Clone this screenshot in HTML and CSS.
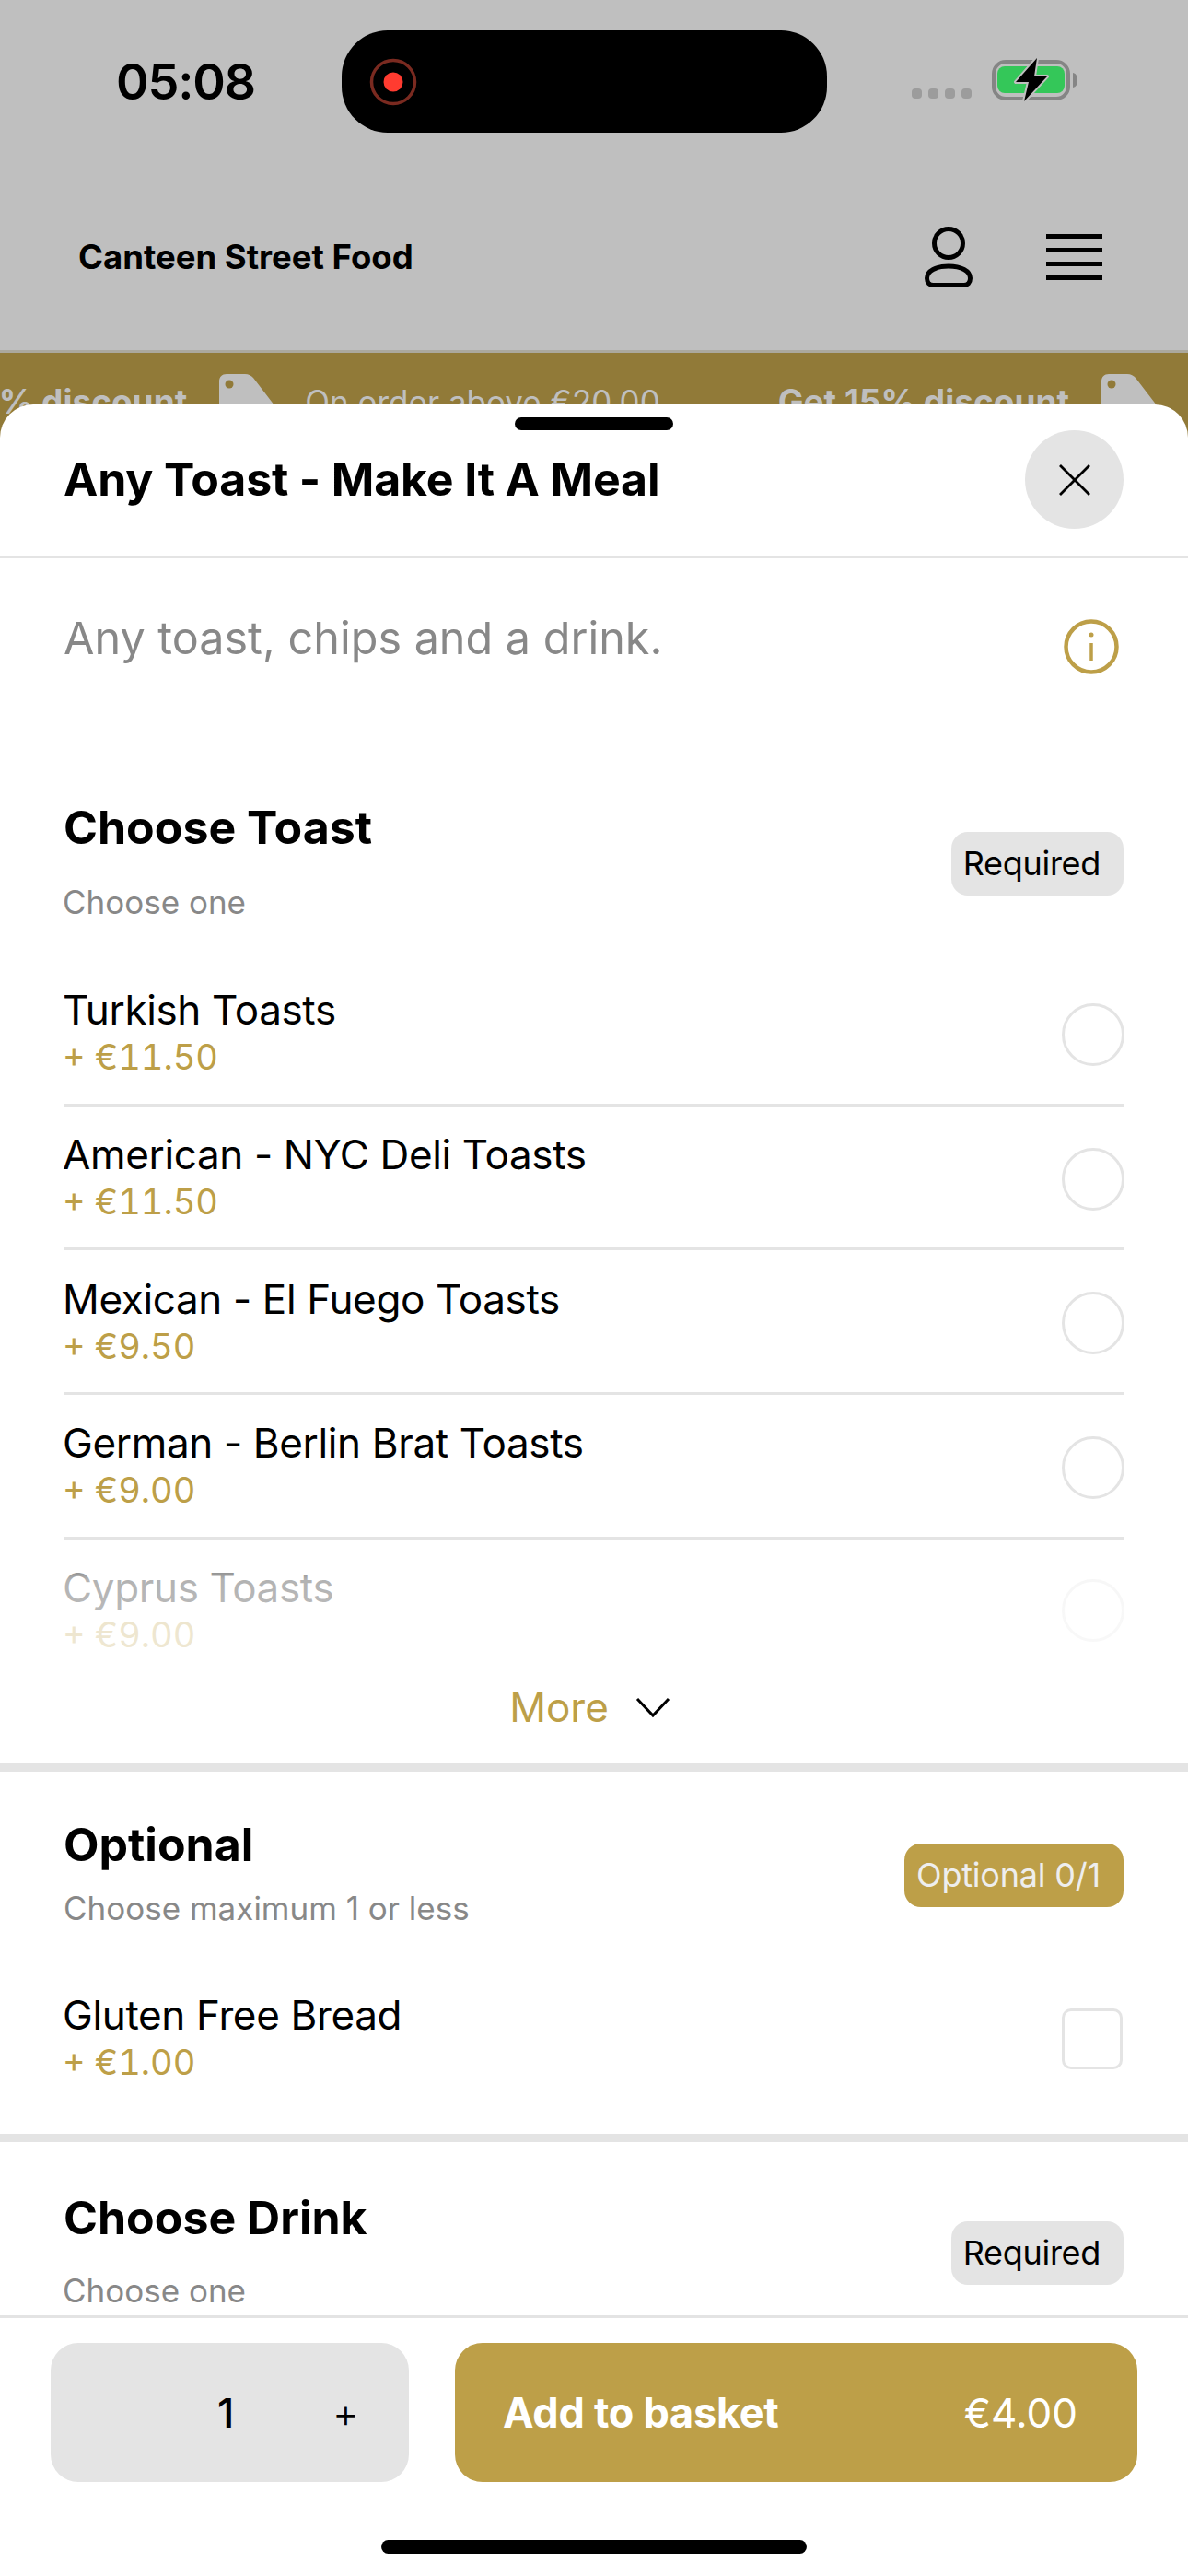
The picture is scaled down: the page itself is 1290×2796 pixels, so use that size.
FILE: index.html
```html
<!DOCTYPE html>
<html lang="en">
<head>
<meta charset="utf-8">
<title>Any Toast - Make It A Meal</title>
<link rel="stylesheet" href="styles.css">
</head>
<body>
<div class="phone">
  <div class="backdrop">
    <div class="status">
      <span class="time">05:08</span>
      <div class="island">
        <svg class="rec" width="56" height="56" viewBox="0 0 56 56"><circle cx="28" cy="28" r="23.5" fill="none" stroke="#7a2a20" stroke-width="3.5"/><circle cx="28" cy="28" r="10.5" fill="#ff3b30"/></svg>
      </div>
      <div class="status-right">
        <div class="dots"><i></i><i></i><i></i><i></i></div>
        <svg class="battery" width="96" height="50" viewBox="0 0 96 50">
          <rect x="2" y="5" width="81" height="40" rx="13" fill="none" stroke="#858585" stroke-width="4"/>
          <rect x="6" y="10" width="73" height="29" rx="8" fill="#34c759"/>
          <path d="M88 17c4 1 5 4 5 8s-1 7-5 8z" fill="#858585"/>
          <path d="M49 1 L26 27 H40 L35 48 L60 21 H46 Z" fill="#000" stroke="#bfbfbf" stroke-width="4" stroke-linejoin="round" paint-order="stroke"/>
        </svg>
      </div>
    </div>
    <header class="topbar">
      <span class="brand">Canteen Street Food</span>
      <div class="top-icons">
        <svg width="52" height="66" viewBox="0 0 52 66" fill="none" stroke="#000" stroke-width="5"><circle cx="26" cy="18" r="15.500"/><path d="M2.500 56c0-8 10-13 23.500-13s23.500 5 23.500 13c0 5-3 7.500-7 7.500H9.500c-4 0-7-2.500-7-7.500z" stroke-linejoin="round"/></svg>
        <div class="burger"><i></i><i></i><i></i><i></i></div>
      </div>
    </header>
    <div class="banner">
      <div class="track">
        <span class="promo-bold">Get 15% discount</span>
        <svg class="tag" width="62" height="64" viewBox="0 0 62 64"><path d="M8 0H28c4 0 7 2 9 4L60 34c3 4 2 8-1 11L42 60c-4 4-9 4-13 0L4 44c-3-3-4-5-4-9V8C0 3 3 0 8 0z" fill="#bfbfbf"/><circle cx="11" cy="11" r="4.500" fill="#917a38"/></svg>
        <span class="promo">On order above €20.00</span>
        <span class="promo-bold">Get 15% discount</span>
        <svg class="tag" width="62" height="64" viewBox="0 0 62 64"><path d="M8 0H28c4 0 7 2 9 4L60 34c3 4 2 8-1 11L42 60c-4 4-9 4-13 0L4 44c-3-3-4-5-4-9V8C0 3 3 0 8 0z" fill="#bfbfbf"/><circle cx="11" cy="11" r="4.500" fill="#917a38"/></svg>
      </div>
    </div>
  </div>

  <section class="sheet">
    <div class="handle"></div>
    <div class="sheet-head">
      <h1 class="sheet-title">Any Toast - Make It A Meal</h1>
      <button class="close" aria-label="Close">
        <svg width="36" height="36" viewBox="0 0 36 36" fill="none" stroke="#000" stroke-width="2.800"><path d="M2 2 34 34M34 2 2 34"/></svg>
      </button>
    </div>
    <div class="scroll">
      <div class="desc">
        <p class="desc-text">Any toast, chips and a drink.</p>
        <svg class="info" width="60" height="60" viewBox="0 0 60 60" fill="none" stroke="#bd9f48"><circle cx="30" cy="30" r="27.500" stroke-width="4.500"/><path d="M30 26V45" stroke-width="3.500"/><circle cx="30" cy="17" r="2.500" fill="#bd9f48" stroke="none"/></svg>
      </div>

      <div class="group group-first">
        <div class="group-head">
          <div class="group-text">
            <h2 class="group-title">Choose Toast</h2>
            <p class="group-sub group-sub-short">Choose one</p>
          </div>
          <span class="badge">Required</span>
        </div>
        <div class="list">
          <div class="item"><div class="item-text"><div class="name">Turkish Toasts</div><div class="price">+ €11.50</div></div><span class="radio"></span></div>
          <div class="item"><div class="item-text"><div class="name">American - NYC Deli Toasts</div><div class="price">+ €11.50</div></div><span class="radio"></span></div>
          <div class="item"><div class="item-text"><div class="name">Mexican - El Fuego Toasts</div><div class="price">+ €9.50</div></div><span class="radio"></span></div>
          <div class="item"><div class="item-text"><div class="name">German - Berlin Brat Toasts</div><div class="price">+ €9.00</div></div><span class="radio"></span></div>
          <div class="item"><div class="item-text"><div class="name">Cyprus Toasts</div><div class="price">+ €9.00</div></div><span class="radio"></span></div>
        </div>
        <div class="more">
          <span class="more-label">More</span>
          <svg width="38" height="24" viewBox="0 0 38 24" fill="none" stroke="#000" stroke-width="3"><path d="M2 3 19 21 36 3"/></svg>
        </div>
      </div>

      <div class="group group-opt">
        <div class="group-head group-head-tight">
          <div class="group-text">
            <h2 class="group-title">Optional</h2>
            <p class="group-sub">Choose maximum 1 or less</p>
          </div>
          <span class="badge badge-gold">Optional 0/1</span>
        </div>
        <div class="item"><div class="item-text"><div class="name">Gluten Free Bread</div><div class="price">+ €1.00</div></div><span class="check"></span></div>
      </div>

      <div class="group group-last">
        <div class="group-head">
          <div class="group-text">
            <h2 class="group-title">Choose Drink</h2>
            <p class="group-sub group-sub-short">Choose one</p>
          </div>
          <span class="badge">Required</span>
        </div>
      </div>
    </div>

    <footer class="footer">
      <div class="actions">
        <div class="qty"><span class="qty-num">1</span><span class="qty-plus">+</span></div>
        <button class="add"><span class="add-label">Add to basket</span><span class="add-price">€4.00</span></button>
      </div>
      <div class="home"></div>
    </footer>
  </section>
</div>
</body>
</html>
```
FILE: styles.css
```css
* { box-sizing: border-box; margin: 0; padding: 0; }
html, body { width: 1290px; height: 2796px; overflow: hidden; }
body { font-family: Inter, "Liberation Sans", sans-serif; background: #fff; color: #000; }
.phone { position: relative; width: 1290px; height: 2796px; overflow: hidden; }

.backdrop { background: #bfbfbf; height: 500px; }
.status { height: 205px; padding: 33px 0 0 126px; display: flex; align-items: flex-start; }
.time { width: 245px; font-size: 54px; line-height: 111px; font-weight: 600; letter-spacing: -1.2px; }
.island { width: 527px; height: 111px; background: #000; border-radius: 50px; padding-left: 28px; display: flex; align-items: center; }
.status-right { margin-left: 92px; margin-top: 29px; display: flex; align-items: flex-end; gap: 22px; }
.dots { display: flex; gap: 7px; padding-bottom: 5px; }
.dots i { width: 11px; height: 11px; border-radius: 4px; background: #9c9c9c; }

.topbar { height: 178px; padding: 0 93px 27px 85px; display: flex; align-items: center; justify-content: space-between; border-bottom: 3px solid #aba89d; }
.brand { font-size: 36.5px; font-weight: 700; }
.top-icons { display: flex; align-items: center; gap: 80px; }
.burger { display: flex; flex-direction: column; gap: 10px; }
.burger i { display: block; width: 61px; height: 5px; background: #000; }

.banner { background: #917a38; height: 117px; padding-top: 28px; }
.track { display: flex; align-items: flex-start; margin-left: -113px; color: #bfbfbf; font-size: 35px; line-height: 50px; white-space: nowrap; }
.promo-bold { font-weight: 700; font-size: 37px; }
.tag { margin: -5px 31px 0 35px; flex: none; }
.promo { margin-right: 128px; }

.sheet { position: absolute; left: 0; right: 0; top: 439px; bottom: 0; background: #fff; border-radius: 36px 36px 0 0; display: flex; flex-direction: column; }
.handle { position: absolute; top: 14px; left: 559px; width: 172px; height: 14px; border-radius: 7px; background: #000; }
.sheet-head { height: 167px; flex: none; padding: 28px 70px 0 70px; display: flex; justify-content: space-between; align-items: flex-start; border-bottom: 3px solid #e4e4e4; }
.sheet-title { font-size: 50px; line-height: 106px; font-weight: 700; letter-spacing: -0.15px; margin-left: -1px; }
.close { width: 107px; height: 107px; border-radius: 50%; border: 0; background: #e4e4e4; display: flex; align-items: center; justify-content: center; }

.scroll { flex: 1; overflow: hidden; min-height: 0; }
.desc { height: 210px; padding: 57px 70px 0 70px; display: flex; justify-content: space-between; align-items: flex-start; }
.desc-text { font-size: 48.5px; line-height: 60px; color: #888; margin-left: -1px; }
.info { margin: 9px 5px 0 0; }

.group { padding: 52px 70px 0; border-bottom: 9px solid #e4e4e4; }
.group-opt { padding-top: 49px; padding-bottom: 26px; }
.group-last { border-bottom: 0; }
.group-head { display: flex; justify-content: space-between; align-items: center; }
.group-text { display: flex; flex-direction: column; gap: 30px; margin-left: -1px; }
.group-first .group-text { gap: 32px; }
.group-head-tight .group-text { gap: 20px; }
.group-title { font-size: 50px; line-height: 60px; font-weight: 700; }
.group-sub { font-size: 35px; line-height: 38px; color: #888; }
.group-sub-short { margin-left: -1px; }
.badge { margin-top: 9px; padding: 0 25px 0 13px; height: 69px; border-radius: 18px; background: #e4e4e4; font-size: 36px; line-height: 69px; letter-spacing: -0.3px; }
.badge-gold { background: #bd9f48; color: #eee; letter-spacing: -0.2px; padding-left: 13px; }

.list { position: relative; height: 754px; margin-top: 46px; }
.list::after { content: ""; position: absolute; left: 0; right: 0; bottom: 0; height: 128px; background: linear-gradient(rgba(255,255,255,0), rgba(255,255,255,0.7) 35%, rgba(255,255,255,0.76)); }
.item { height: 156.7px; padding-top: 4px; display: flex; justify-content: space-between; align-items: center; border-bottom: 3px solid #e4e4e4; }
.item:last-child { border-bottom: 0; }
.list .item:last-child { height: 127px; align-items: flex-start; padding-top: 29px; }
.group-opt .item { margin-top: 43px; }
.item-text { margin-left: -2px; }
.name { font-size: 44px; line-height: 47px; letter-spacing: -0.35px; }
.price { margin-top: 2px; font-size: 38px; line-height: 50px; color: #bd9f48; font-variant-numeric: tabular-nums; }
.radio { width: 68px; height: 68px; flex: none; margin-right: -1px; border-radius: 50%; border: 3px solid #e4e4e4; }
.list .item:last-child .radio { margin-top: 14px; }
.check { width: 66px; height: 66px; flex: none; margin-right: 1px; border-radius: 10px; border: 3px solid #e4e4e4; }

.more { height: 116px; padding: 0 9px 6px 0; display: flex; align-items: center; justify-content: center; gap: 29px; }
.more-label { font-size: 44px; color: #bd9f48; }

.footer { flex: none; height: 283px; border-top: 3px solid #e4e4e4; background: #fff; padding: 27px 55px 0; }
.actions { display: flex; gap: 50px; }
.qty { width: 389px; height: 151px; border-radius: 30px; background: #e4e4e4; display: flex; align-items: center; }
.qty-num { margin-left: 181px; width: 125px; font-size: 44px; font-weight: 500; }
.qty-plus { font-size: 44px; font-weight: 300; }
.add { width: 741px; height: 151px; border: 0; border-radius: 30px; background: #bd9f48; color: #fff; display: flex; align-items: center; justify-content: space-between; padding: 0 65px 0 52px; font-family: inherit; }
.add-label { font-size: 45px; font-weight: 700; letter-spacing: -0.25px; }
.add-price { font-size: 44px; }
.home { width: 462px; height: 15px; margin: 63px auto 0; border-radius: 8px; background: #000; }
```
